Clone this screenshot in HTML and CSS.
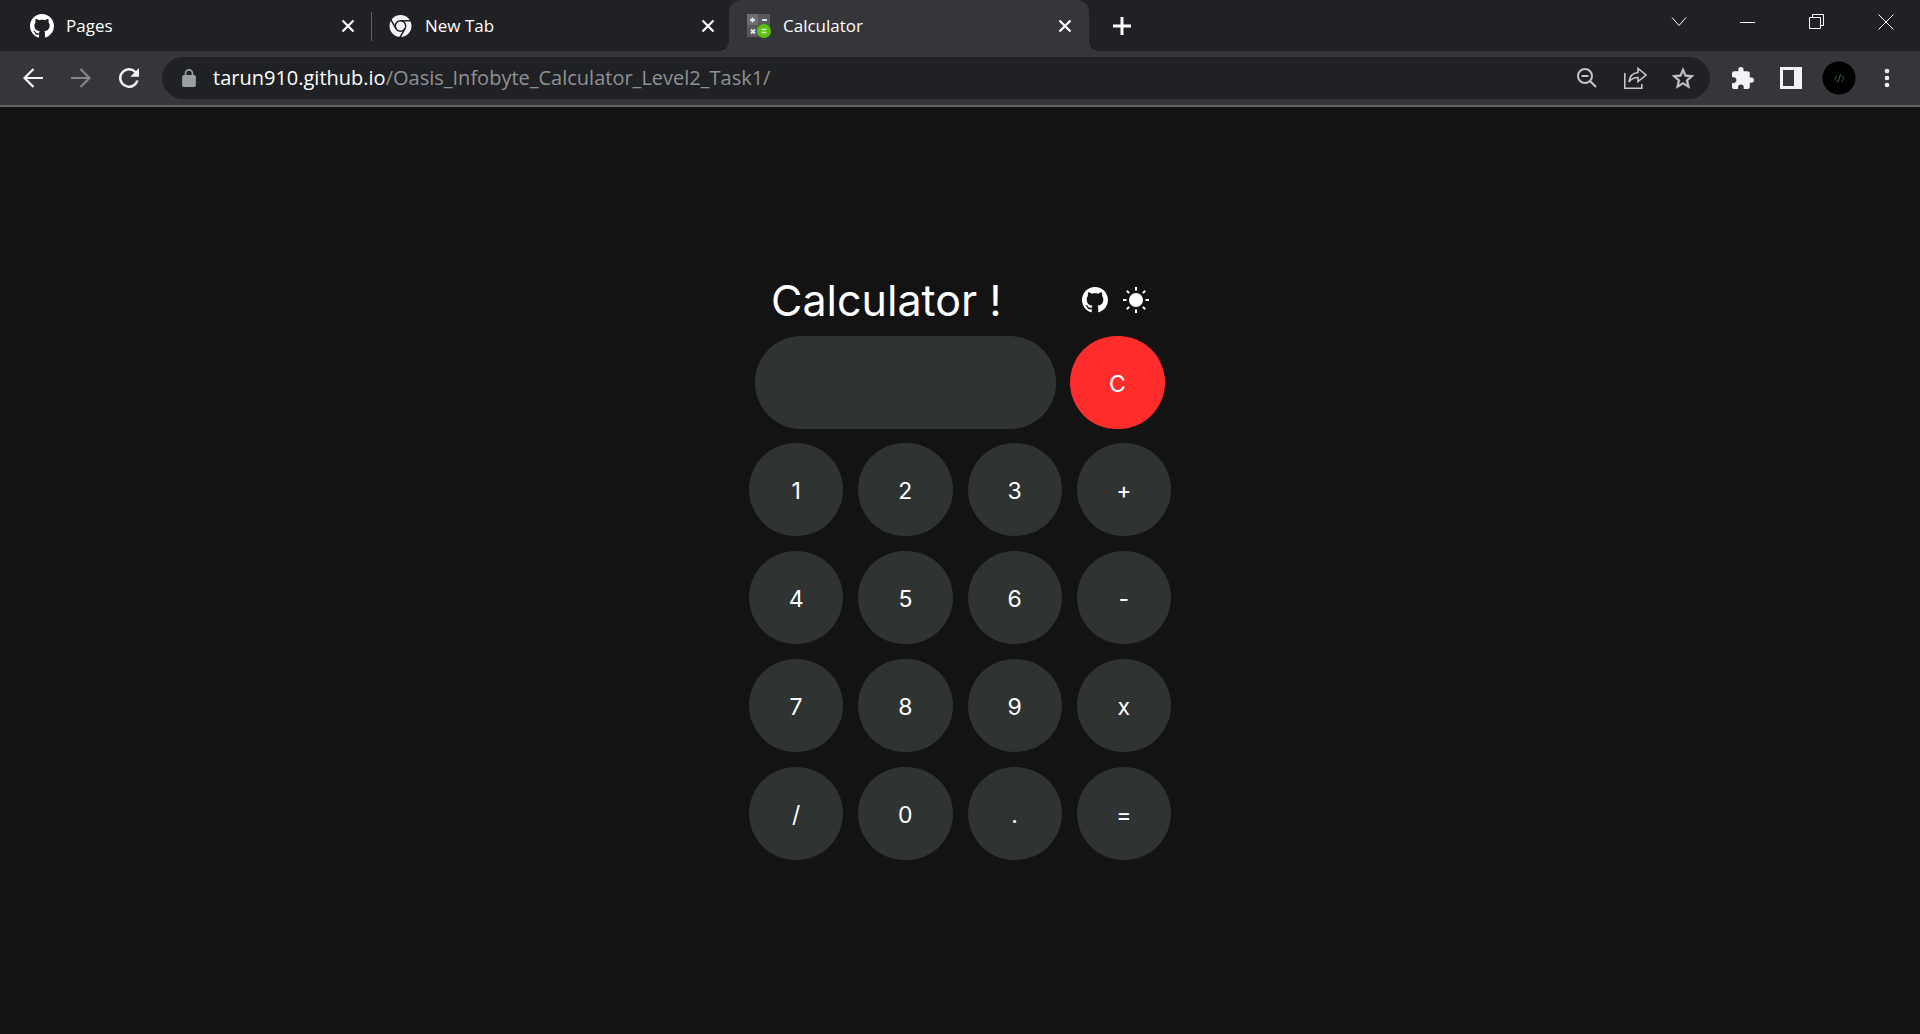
FILE: index.html
```html
<!DOCTYPE html>
<html lang="en">
<head>
<meta charset="utf-8">
<title>Calculator</title>
<link rel="stylesheet" href="styles.css">
</head>
<body>
<svg class="defs" aria-hidden="true">
  <symbol id="github" viewBox="0 0 16 16"><path d="M8 0C3.58 0 0 3.58 0 8c0 3.54 2.29 6.53 5.47 7.59.4.07.55-.17.55-.38 0-.19-.01-.82-.01-1.49-2.01.37-2.53-.49-2.69-.94-.09-.23-.48-.94-.82-1.13-.28-.15-.68-.52-.01-.53.63-.01 1.08.58 1.23.82.72 1.21 1.87.87 2.33.66.07-.52.28-.87.51-1.07-1.78-.2-3.64-.89-3.64-3.95 0-.87.31-1.59.82-2.15-.08-.2-.36-1.02.08-2.12 0 0 .67-.21 2.2.82.64-.18 1.32-.27 2-.27s1.36.09 2 .27c1.53-1.04 2.2-.82 2.2-.82.44 1.1.16 1.92.08 2.12.51.56.82 1.27.82 2.15 0 3.07-1.87 3.75-3.65 3.95.29.25.54.73.54 1.48 0 1.07-.01 1.93-.01 2.2 0 .21.15.46.55.38A8.01 8.01 0 0 0 16 8c0-4.42-3.58-8-8-8z" fill="currentColor"/></symbol>
  <symbol id="close" viewBox="0 0 14 14"><path d="M1.500 1.500l11 11M12.500 1.500l-11 11" stroke="currentColor" stroke-width="2.200" fill="none"/></symbol>
</svg>
<header class="browser">
  <nav class="tabs" aria-label="Tabs">
    <div class="tab tab-first">
      <svg class="favicon"><use href="#github"/></svg>
      <span class="tab-title">Pages</span>
      <button class="tab-close" aria-label="Close Pages"><svg><use href="#close"/></svg></button>
    </div>
    <div class="tab">
      <svg class="favicon" viewBox="0 0 24 24"><circle cx="11.500" cy="12" r="11" fill="#f1f3f4"/><g fill="none" stroke="#202124" stroke-width="1.500"><circle cx="11.500" cy="12" r="5.200"/><path d="M11.500 6.800h11M7 14.600L1.500 5.200M16 14.600l-5.500 9.600"/></g></svg>
      <span class="tab-title">New Tab</span>
      <button class="tab-close" aria-label="Close New Tab"><svg><use href="#close"/></svg></button>
    </div>
    <div class="tab tab-active">
      <svg class="favicon" viewBox="0 0 24 24"><path d="M0 0h23v23H0z" fill="#5a5a5a"/><path d="M0 0h11v11H0z" fill="#6e6e6e"/><path d="M11.500 11.500H23V23H11.500z" fill="#484848"/><path d="M5.500 3.500v5M3 6h5M15 6h5M4 15.500l4 4M8 15.500l-4 4" stroke="#d5eaf2" stroke-width="1.800"/><circle cx="17" cy="17" r="7" fill="#5ac20e"/><path d="M14.500 15.500h5M14.500 18.500h5" stroke="#d2f0bc" stroke-width="1.400"/></svg>
      <span class="tab-title">Calculator</span>
      <button class="tab-close" aria-label="Close Calculator"><svg><use href="#close"/></svg></button>
    </div>
    <button class="new-tab" aria-label="New tab"><svg viewBox="0 0 18 18" width="18" height="18"><path d="M9 0v18M0 9h18" stroke="currentColor" stroke-width="3"/></svg></button>
    <div class="window-controls">
      <button aria-label="Search tabs"><svg width="16" height="16" viewBox="0 0 16 16"><path d="M1 3.500l7 8 7-8"/></svg></button>
      <button aria-label="Minimize"><svg width="16" height="16" viewBox="0 0 16 16"><path d="M0 8.500h15"/></svg></button>
      <button aria-label="Restore"><svg width="16" height="16" viewBox="0 0 16 16"><path d="M.5 3.500h11v11H.500zM3.500 3V.500h11v11H12"/></svg></button>
      <button aria-label="Close window"><svg width="16" height="16" viewBox="0 0 16 16"><path d="M.5.500l15 15M15.500.500l-15 15"/></svg></button>
    </div>
  </nav>
  <div class="toolbar">
    <button class="tool" aria-label="Back"><svg viewBox="0 0 20 20" width="20" height="20"><path d="M20 10H2M10.500 1L1.500 10l9 9" fill="none" stroke="currentColor" stroke-width="2.200"/></svg></button>
    <button class="tool tool-off" aria-label="Forward"><svg viewBox="0 0 20 20" width="20" height="20"><path d="M0 10h18M9.500 1l9 9-9 9" fill="none" stroke="currentColor" stroke-width="2.200"/></svg></button>
    <button class="tool" aria-label="Reload"><svg viewBox="4 4 16 16" width="20" height="20"><path d="M17.650 6.350A7.960 7.960 0 0 0 12 4a8 8 0 1 0 7.730 10h-2.080A6 6 0 1 1 12 6c1.660 0 3.140.690 4.220 1.780L13 11h7V4z" fill="currentColor"/></svg></button>
    <div class="omnibox">
      <svg class="lock" viewBox="4 1 16 21" width="14" height="18"><path d="M18 8h-1V6A5 5 0 0 0 7 6v2H6a2 2 0 0 0-2 2v10c0 1.100.9 2 2 2h12a2 2 0 0 0 2-2V10a2 2 0 0 0-2-2zM8.900 6a3.100 3.100 0 0 1 6.200 0v2H8.900z" fill="#9aa0a6"/></svg>
      <div class="address" role="textbox" aria-label="Address" contenteditable="true" spellcheck="false"><span class="host">tarun910.github.io</span>/Oasis_Infobyte_Calculator_Level2_Task1/</div>
      <button class="tool tool-soft" aria-label="Zoom out"><svg viewBox="0 0 20 20" width="20" height="20" fill="none" stroke="currentColor" stroke-width="2"><circle cx="8" cy="8" r="7"/><path d="M4.500 8h7M13 13l6 6"/></svg></button>
      <button class="tool tool-soft" aria-label="Share"><svg viewBox="0 0 24 24" width="24" height="24" fill="none" stroke="currentColor" stroke-width="1.600"><path d="M1.800 7v15.200h17V18"/><path d="M15 6.500V2.500l8 6.500-8 6.500v-4c-4.500 0-7 1.500-9 4.500.5-5 3.500-9 9-9.500z"/></svg></button>
      <button class="tool tool-soft" aria-label="Bookmark"><svg viewBox="2 2 20 19" width="22" height="22"><path d="M22 9.240l-7.190-.62L12 2 9.190 8.630 2 9.240l5.460 4.730L5.820 21 12 17.270 18.180 21l-1.630-7.030zM12 15.400l-3.760 2.270 1-4.280-3.320-2.880 4.380-.38L12 6.100l1.710 4.040 4.380.38-3.320 2.880 1 4.280z" fill="currentColor" stroke="currentColor" stroke-width=".4"/></svg></button>
    </div>
    <button class="tool" aria-label="Extensions"><svg viewBox="2 1 21 21" width="22" height="22"><path d="M20.500 11H19V7a2 2 0 0 0-2-2h-4V3.500a2.500 2.500 0 0 0-5 0V5H4a2 2 0 0 0-2 2v3.800h1.500a2.700 2.700 0 0 1 0 5.400H2V20c0 1.100.9 2 2 2h3.800v-1.500a2.700 2.700 0 0 1 5.400 0V22H17a2 2 0 0 0 2-2v-4h1.500a2.500 2.500 0 0 0 0-5z" fill="currentColor"/></svg></button>
    <button class="tool" aria-label="Side panel"><svg viewBox="0 0 22 22" width="22" height="22"><path d="M0 0h22v22H0zM3 3v16h11V3z" fill="currentColor" fill-rule="evenodd"/></svg></button>
    <button class="tool" aria-label="Profile"><svg viewBox="0 0 34 34" width="34" height="34"><circle cx="17" cy="17" r="16.500" fill="#000"/><path d="M15 14.500L12.500 17.500l2.500 3M19.500 14.500l2.500 3-2.500 3" fill="none" stroke="#176a70"/><path d="M18.500 13.500l-2.500 8" stroke="#5a5a5a"/></svg></button>
    <button class="tool" aria-label="Menu"><svg viewBox="0 0 6 20" width="6" height="20" fill="currentColor"><circle cx="3" cy="3" r="2.300"/><circle cx="3" cy="10" r="2.300"/><circle cx="3" cy="17" r="2.300"/></svg></button>
  </div>
</header>
<main class="page">
  <section class="calculator">
    <div class="heading">
      <h1>Calculator !</h1>
      <a href="#" aria-label="GitHub"><svg width="26" height="26"><use href="#github"/></svg></a>
      <button class="theme" aria-label="Light theme"><svg viewBox="0 0 26 26" width="26" height="26"><circle cx="13" cy="13" r="7" fill="currentColor"/><path d="M13 0v3.500M13 22.500V26M0 13h3.500M22.500 13H26M3.800 3.800l2.300 2.300M19.900 19.900l2.300 2.300M22.200 3.800l-2.300 2.300M6.100 19.900l-2.300 2.300" stroke="currentColor" stroke-width="2"/></svg></button>
    </div>
    <div class="readout">
      <input class="display" type="text" aria-label="Result" readonly>
      <button class="key clear">C</button>
    </div>
    <div class="keys">
      <button class="key">1</button><button class="key">2</button><button class="key">3</button><button class="key">+</button>
      <button class="key">4</button><button class="key">5</button><button class="key">6</button><button class="key">-</button>
      <button class="key">7</button><button class="key">8</button><button class="key">9</button><button class="key">x</button>
      <button class="key">/</button><button class="key">0</button><button class="key">.</button><button class="key">=</button>
    </div>
  </section>
</main>
</body>
</html>
```
FILE: styles.css
```css
* { box-sizing: border-box; }
body {
  margin: 0;
  min-height: 100vh;
  display: flex;
  flex-direction: column;
  background: #131313;
  color: #fff;
  font-family: Inter, "Liberation Sans", sans-serif;
}
button {
  border: 0;
  padding: 0;
  background: none;
  color: inherit;
  font: inherit;
  cursor: pointer;
}
svg { display: block; flex: none; }
.defs { position: absolute; width: 0; height: 0; }

.browser {
  border-bottom: 2px solid #606163;
  background: #35363a;
  font-family: "Open Sans", "Noto Sans", sans-serif;
}
.tabs { display: flex; height: 51px; background: #202124; }
.tab {
  position: relative;
  display: flex;
  align-items: center;
  gap: 12px;
  width: 360px;
  padding: 0 17px;
  font-size: 17px;
}
.tab-first { width: 372px; padding-left: 30px; }
.tab-first::after {
  content: "";
  position: absolute;
  right: 0;
  top: 12px;
  width: 1px;
  height: 29px;
  background: #5f6063;
}
.tab-active { margin-left: -3px; padding-left: 18px; border-radius: 12px 12px 0 0; background: #35363a; }
.tab-active::before,
.tab-active::after {
  content: "";
  position: absolute;
  bottom: 0;
  width: 10px;
  height: 10px;
}
.tab-active::before { right: 100%; background: radial-gradient(circle at 0 0, #202124 10px, #35363a 10px); }
.tab-active::after { left: 100%; background: radial-gradient(circle at 100% 0, #202124 10px, #35363a 10px); }
.favicon { width: 24px; height: 24px; }
.tab-title { flex: 1; }
.tab-close svg { width: 14px; height: 14px; }
.new-tab { display: grid; place-items: center; width: 66px; }
.window-controls { display: flex; margin-left: auto; height: 43px; }
.window-controls button { display: grid; place-items: center; width: 69px; }
.window-controls svg { fill: none; stroke: #fff; }

.toolbar { display: flex; align-items: center; height: 54px; padding: 0 9px; color: #f1f3f4; }
.tool { display: grid; place-items: center; flex: none; width: 48px; height: 42px; }
.tool-off { color: #85868a; }
.tool-soft { color: #c4c5c7; }
.omnibox {
  display: flex;
  align-items: center;
  flex: 1;
  height: 42px;
  margin: 0 9px;
  padding: 0 3px;
  border-radius: 21px;
  background: #202124;
}
.lock { margin: 0 17px; }
.address { flex: 1; outline: 0; font-size: 20px; line-height: 28px; color: #8f9194; white-space: nowrap; }
.host { color: #fff; }

.page { flex: 1; display: flex; align-items: center; justify-content: center; padding-bottom: 18px; }
.calculator { width: 422px; }
.heading { display: flex; align-items: center; gap: 15px; height: 73px; padding: 0 22px; }
.heading h1 { flex: 1; margin: 0; font-size: 43px; font-weight: 400; line-height: 72px; }
.heading a { color: inherit; }
.readout { display: flex; gap: 14px; margin: 0 6px 14px; }
.display {
  flex: 1;
  min-width: 0;
  height: 93px;
  padding: 0 28px;
  border: 0;
  border-radius: 46px;
  outline: 0;
  background: #2f3332;
  color: #fff;
  font: inherit;
  font-size: 23px;
}
.keys { display: grid; grid-template-columns: repeat(4, 1fr); gap: 15px; }
.key { height: 93px; padding-top: 2px; border-radius: 47px; background: #2f3332; font-size: 23px; }
.clear { width: 95px; background: #ff2c2c; }
```
